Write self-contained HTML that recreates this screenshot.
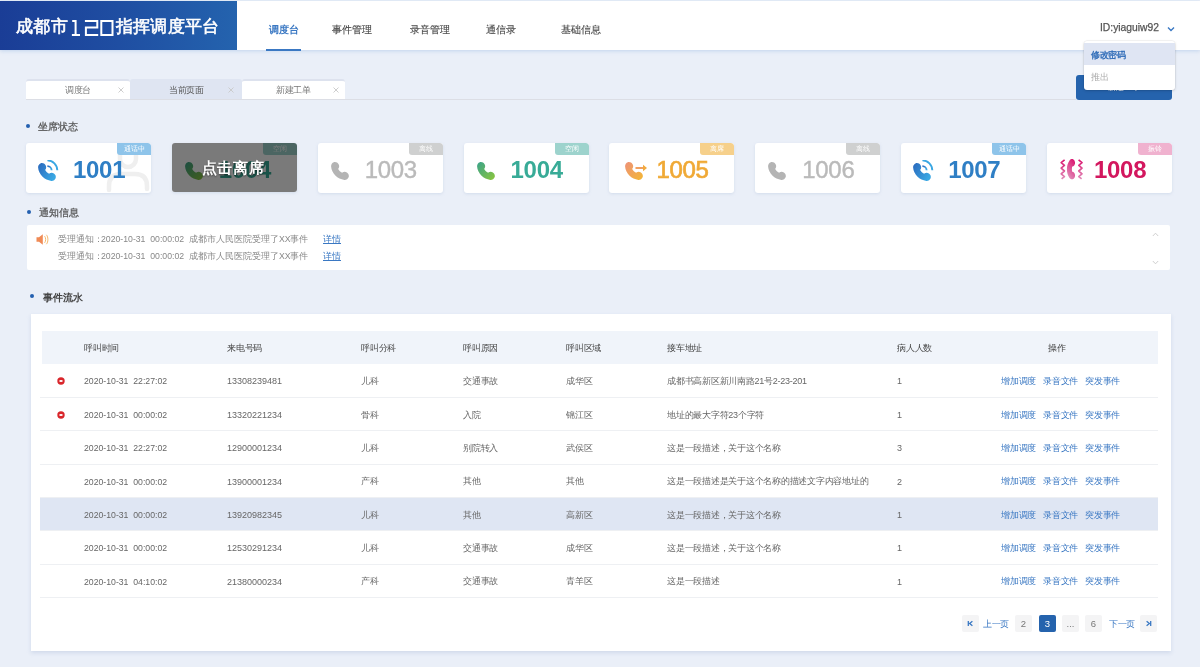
<!DOCTYPE html>
<html><head><meta charset="utf-8"><style>
*{margin:0;padding:0;box-sizing:border-box}
html,body{width:1200px;height:667px;overflow:hidden}
#root{position:absolute;left:0;top:0;width:1200px;height:667px;will-change:transform}
body{background:#eaeff8;font-family:"Liberation Sans",sans-serif;color:#555;position:relative}
.abs{position:absolute}
#hdr{position:absolute;left:0;top:1px;width:1200px;height:49px;background:#fff;box-shadow:0 1px 4px rgba(110,155,215,.32)}
#logo{position:absolute;left:0;top:0;width:237px;height:49px;background:linear-gradient(90deg,#1a3d96 0%,#1f4ea2 50%,#2463ae 100%)}
.title{position:absolute;top:13px;color:#fff;font-size:17px;-webkit-text-stroke:0.6px #fff;letter-spacing:0.4px;white-space:nowrap;line-height:26px}
.nav{position:absolute;top:18px;font-size:10px;line-height:22px;color:#4a4a4a;-webkit-text-stroke:0.15px #4a4a4a;white-space:nowrap}
.nav.on{color:#3a78c3;font-weight:bold;-webkit-text-stroke:0}
#uline{position:absolute;left:266px;top:48px;width:35px;height:2px;background:#3a78c3}
#uid{position:absolute;left:1100px;top:19px;font-size:10.3px;line-height:16px;color:#555;-webkit-text-stroke:0.25px #555}
#chev{position:absolute;left:1167px;top:25px}
#tabs{position:absolute;left:26px;top:79px;width:1050px;height:21px;border-bottom:1px solid #dcdee5}
.tab{position:absolute;top:0;height:20px;background:#fff;border-top:2px solid #dde2ee;border-radius:3px 3px 0 0;font-size:9px;letter-spacing:-0.5px;line-height:17px;color:#777}
.tab .t{position:absolute;top:1px;white-space:nowrap}
.tab .x{position:absolute;top:6px;width:6px;height:6px}
#btn{position:absolute;left:1076px;top:75px;width:96px;height:25px;background:#2563ad;border-radius:3px}
#dd{position:absolute;left:1084px;top:41px;width:91px;height:48.5px;background:#fff;border-radius:3px;box-shadow:0 0 0 0.5px rgba(0,0,0,.08),0 1px 3px rgba(0,0,0,.15)}
.sec{position:absolute;font-size:10px;line-height:14px;color:#555;-webkit-text-stroke:0.25px #555;white-space:nowrap}
.dot{position:absolute;width:4px;height:4px;border-radius:50%;background:#2460b0}
.card{position:absolute;top:143px;width:125px;height:50px;background:#fff;border-radius:3px;box-shadow:0 1px 3px rgba(170,185,215,.35);overflow:hidden}
.badge{position:absolute;right:0;top:0;width:34px;height:12px;border-radius:0 3px 0 3px;color:#fff;font-size:7px;line-height:12px;text-align:center}
.num{position:absolute;left:47px;top:14px;font-size:24px;line-height:26px;font-weight:bold;letter-spacing:-0.3px}
#notice{position:absolute;left:27px;top:225px;width:1143px;height:45px;background:#fff;border-radius:2px}
.nt{position:absolute;left:31px;font-size:8.7px;line-height:12px;color:#888;white-space:nowrap}
.nt a{color:#3a78c3;text-decoration:underline;position:absolute;left:265px}
#panel{position:absolute;left:31px;top:314px;width:1140px;height:337px;background:#fff;box-shadow:0 2px 4px rgba(170,185,215,.4)}
table{position:absolute;left:9px;top:17px;width:1118px;border-collapse:collapse;table-layout:fixed}
th{height:33px;background:#f0f4fa;letter-spacing:-0.25px;font-size:9px;font-weight:normal;color:#444;text-align:left;padding:2px 0 0 0;white-space:nowrap}
td{height:33.36px;letter-spacing:-0.25px;font-size:9px;color:#666;text-align:left;padding:2px 0 0 0;border-bottom:1px solid #eef0f3;white-space:nowrap}
tr.hl td{background:#dfe6f3}
.ops a{color:#3a78c3;margin-right:7px}
.dt{font-size:8.7px;letter-spacing:0}
.ph{letter-spacing:0}
th:first-child{background:linear-gradient(90deg,#fff 2px,#f0f4fa 2px)}
.pg{position:absolute;top:301px;height:17px;font-size:9px;line-height:17px;text-align:center;letter-spacing:-0.5px}
.pb{width:17px;background:#f4f4f5;border-radius:2px;color:#777;letter-spacing:0;font-size:9.5px}
.pl{color:#3a78c3;padding-top:1px}
</style></head><body><div id="root">

<div id="hdr">
  <div id="logo"><div class="title" style="left:16px">成都市</div><svg class="abs" style="left:70px;top:18px" width="45" height="18" viewBox="0 -1 45 18"><path d="M2.2 1H5.6M5.6 0.1V16M1.9 15.1H10M14.9 1H27.3V7.6H15.9V15H28.2M31.3 0.9H42.5V15.1H31.3Z" fill="none" stroke="#fff" stroke-width="2"/></svg><div class="title" style="left:115.5px">指挥调度平台</div></div>
  <div class="nav on" style="left:269px">调度台</div>
  <div class="nav" style="left:332px">事件管理</div>
  <div class="nav" style="left:410px">录音管理</div>
  <div class="nav" style="left:486px">通信录</div>
  <div class="nav" style="left:561px">基础信息</div>
  <div id="uline"></div>
  <div id="uid">ID:yiaguiw92</div>
  <svg id="chev" width="8" height="6" viewBox="0 0 8 6"><path d="M1 1.5 L4 4.5 L7 1.5" fill="none" stroke="#3a78c3" stroke-width="1.4"/></svg>
</div>
<div id="tabs">
  <div class="tab" style="left:0;width:104px"><span class="t" style="left:39px">调度台</span><svg class="x" style="left:92px" viewBox="0 0 6 6"><path d="M0.5 0.5L5.5 5.5M5.5 0.5L0.5 5.5" stroke="#c8c8c8" stroke-width="0.9"/></svg></div>
  <div class="tab" style="left:104px;width:112px;background:#dfe5f2;border-top-color:#dfe5f2"><span class="t" style="left:39px;color:#555">当前页面</span><svg class="x" style="left:98px" viewBox="0 0 6 6"><path d="M0.5 0.5L5.5 5.5M5.5 0.5L0.5 5.5" stroke="#c8c8c8" stroke-width="0.9"/></svg></div>
  <div class="tab" style="left:216px;width:103px"><span class="t" style="left:34px">新建工单</span><svg class="x" style="left:91px" viewBox="0 0 6 6"><path d="M0.5 0.5L5.5 5.5M5.5 0.5L0.5 5.5" stroke="#c8c8c8" stroke-width="0.9"/></svg></div>
</div>
<div id="btn"><div style="position:absolute;left:0;top:6px;width:96px;text-align:center;color:#fff;font-size:8px;line-height:13px">新建工单</div></div>
<div id="dd">
  <div style="position:absolute;left:0;top:2px;width:91px;height:22px;background:#dfe5f3"></div>
  <div style="position:absolute;left:7px;top:8px;font-size:9px;letter-spacing:-0.4px;line-height:13px;color:#2f6cb8;-webkit-text-stroke:0.35px #2f6cb8">修改密码</div>
  <div style="position:absolute;left:7px;top:30px;font-size:8.7px;line-height:13px;color:#aaa">推出</div>
</div>
<div class="dot" style="left:26px;top:124px"></div>
<div class="sec" style="left:38px;top:120px">坐席状态</div>
<div class="dot" style="left:27px;top:210px"></div>
<div class="sec" style="left:39px;top:205.5px">通知信息</div>
<div class="dot" style="left:30px;top:294px"></div>
<div class="sec" style="left:43px;top:290.5px;color:#444;-webkit-text-stroke:0;font-weight:bold">事件流水</div>

<div class="card" style="left:26.00px"><svg class="abs" style="left:80px;top:0" width="45" height="50" viewBox="0 0 45 50"><path d="M14 6v10a8 8 0 0 0 16 0V6" fill="none" stroke="#efefef" stroke-width="4.5"/><path d="M3 47V43C3 35 7 31 15 31H29C37 31 41 35 41 43V46" fill="none" stroke="#efefef" stroke-width="4.5" stroke-linecap="round"/></svg><svg class="abs" style="left:12px;top:17px" width="24" height="22" viewBox="0 -3 24 22"><defs><linearGradient id="g1" x1="0" y1="0" x2="1" y2="0.6"><stop offset="0" stop-color="#2a68bd"/><stop offset="1" stop-color="#3aa7e3"/></linearGradient></defs><path d="M2.8 0.3C4.6-0.3 6.6 0.6 7.6 2.2C8.4 3.6 8.4 5.4 7.4 6.6L7.2 6.9C8.2 8.6 9.4 9.8 11.1 10.8L11.4 10.6C12.6 9.6 14.5 9.6 15.9 10.5C17.5 11.5 18.3 13.5 17.6 15.2C17 16.9 15.3 18 13.4 17.9C6.6 17.4 0.5 11.3 0.1 4.6C0 2.6 1.1 0.9 2.8 0.3Z" fill="url(#g1)"/><path d="M9.4 3.1A4.2 4.2 0 0 1 13.6 7.3" fill="none" stroke="url(#g1)" stroke-width="1.9"/><path d="M9.4 -2.6A9.9 9.9 0 0 1 19.3 7.3" fill="none" stroke="#3aa7e3" stroke-width="1.9"/></svg><div class="num" style="color:#2f7fc5;font-weight:bold">1001</div><div class="badge" style="background:#8ec4ea">通话中</div></div>
<div class="card" style="left:171.86px;height:48.5px"><svg class="abs" style="left:13px;top:19px" width="18" height="18" viewBox="0 0 18 18"><defs><linearGradient id="g2" x1="0" y1="0" x2="1" y2="1"><stop offset="0" stop-color="#3aa38a"/><stop offset="1" stop-color="#8cc63c"/></linearGradient></defs><path d="M2.8 0.3C4.6-0.3 6.6 0.6 7.6 2.2C8.4 3.6 8.4 5.4 7.4 6.6L7.2 6.9C8.2 8.6 9.4 9.8 11.1 10.8L11.4 10.6C12.6 9.6 14.5 9.6 15.9 10.5C17.5 11.5 18.3 13.5 17.6 15.2C17 16.9 15.3 18 13.4 17.9C6.6 17.4 0.5 11.3 0.1 4.6C0 2.6 1.1 0.9 2.8 0.3Z" fill="url(#g2)"/></svg><div class="num" style="color:#38ab97;font-weight:bold">1004</div><div class="badge" style="background:#9dd3cd">空闲</div><div class="abs" style="left:0;top:0;width:125px;height:50px;background:rgba(0,0,0,.52)"></div><div class="abs" style="left:30px;top:14px;font-size:15px;letter-spacing:0.6px;line-height:22px;font-weight:bold;color:#fff;text-shadow:0 1px 2px rgba(0,0,0,.5);white-space:nowrap">点击离席</div></div>
<div class="card" style="left:317.71px"><svg class="abs" style="left:13px;top:19px" width="18" height="18" viewBox="0 0 18 18"><defs><linearGradient id="g3" x1="0" y1="0" x2="1" y2="1"><stop offset="0" stop-color="#b4b4b4"/><stop offset="1" stop-color="#b4b4b4"/></linearGradient></defs><path d="M2.8 0.3C4.6-0.3 6.6 0.6 7.6 2.2C8.4 3.6 8.4 5.4 7.4 6.6L7.2 6.9C8.2 8.6 9.4 9.8 11.1 10.8L11.4 10.6C12.6 9.6 14.5 9.6 15.9 10.5C17.5 11.5 18.3 13.5 17.6 15.2C17 16.9 15.3 18 13.4 17.9C6.6 17.4 0.5 11.3 0.1 4.6C0 2.6 1.1 0.9 2.8 0.3Z" fill="url(#g3)"/></svg><div class="num" style="color:#bababa;font-weight:normal;-webkit-text-stroke:0.4px #bababa">1003</div><div class="badge" style="background:#cfd0d0">离线</div></div>
<div class="card" style="left:463.57px"><svg class="abs" style="left:13px;top:19px" width="18" height="18" viewBox="0 0 18 18"><defs><linearGradient id="g4" x1="0" y1="0" x2="1" y2="1"><stop offset="0" stop-color="#3aa38a"/><stop offset="1" stop-color="#8cc63c"/></linearGradient></defs><path d="M2.8 0.3C4.6-0.3 6.6 0.6 7.6 2.2C8.4 3.6 8.4 5.4 7.4 6.6L7.2 6.9C8.2 8.6 9.4 9.8 11.1 10.8L11.4 10.6C12.6 9.6 14.5 9.6 15.9 10.5C17.5 11.5 18.3 13.5 17.6 15.2C17 16.9 15.3 18 13.4 17.9C6.6 17.4 0.5 11.3 0.1 4.6C0 2.6 1.1 0.9 2.8 0.3Z" fill="url(#g4)"/></svg><div class="num" style="color:#38ab97;font-weight:bold">1004</div><div class="badge" style="background:#9dd3cd">空闲</div></div>
<div class="card" style="left:609.43px"><svg class="abs" style="left:16px;top:19px" width="24" height="18" viewBox="0 0 24 18"><defs><linearGradient id="g5" x1="0" y1="0" x2="1" y2="1"><stop offset="0" stop-color="#ee9279"/><stop offset="1" stop-color="#f3b733"/></linearGradient></defs><path d="M2.8 0.3C4.6-0.3 6.6 0.6 7.6 2.2C8.4 3.6 8.4 5.4 7.4 6.6L7.2 6.9C8.2 8.6 9.4 9.8 11.1 10.8L11.4 10.6C12.6 9.6 14.5 9.6 15.9 10.5C17.5 11.5 18.3 13.5 17.6 15.2C17 16.9 15.3 18 13.4 17.9C6.6 17.4 0.5 11.3 0.1 4.6C0 2.6 1.1 0.9 2.8 0.3Z" fill="url(#g5)"/><path d="M10.5 6H19" stroke="#f0a060" stroke-width="1.8"/><path d="M18 2.8L22 6L18 9.2Z" fill="#f2aa3e"/></svg><div class="num" style="color:#f0a935;font-weight:normal;-webkit-text-stroke:0.7px #f0a935">1005</div><div class="badge" style="background:#f6d08b">离席</div></div>
<div class="card" style="left:755.28px"><svg class="abs" style="left:13px;top:19px" width="18" height="18" viewBox="0 0 18 18"><defs><linearGradient id="g6" x1="0" y1="0" x2="1" y2="1"><stop offset="0" stop-color="#b4b4b4"/><stop offset="1" stop-color="#b4b4b4"/></linearGradient></defs><path d="M2.8 0.3C4.6-0.3 6.6 0.6 7.6 2.2C8.4 3.6 8.4 5.4 7.4 6.6L7.2 6.9C8.2 8.6 9.4 9.8 11.1 10.8L11.4 10.6C12.6 9.6 14.5 9.6 15.9 10.5C17.5 11.5 18.3 13.5 17.6 15.2C17 16.9 15.3 18 13.4 17.9C6.6 17.4 0.5 11.3 0.1 4.6C0 2.6 1.1 0.9 2.8 0.3Z" fill="url(#g6)"/></svg><div class="num" style="color:#bababa;font-weight:normal;-webkit-text-stroke:0.4px #bababa">1006</div><div class="badge" style="background:#cfd0d0">离线</div></div>
<div class="card" style="left:901.14px"><svg class="abs" style="left:12px;top:17px" width="24" height="22" viewBox="0 -3 24 22"><defs><linearGradient id="g7" x1="0" y1="0" x2="1" y2="0.6"><stop offset="0" stop-color="#2a68bd"/><stop offset="1" stop-color="#3aa7e3"/></linearGradient></defs><path d="M2.8 0.3C4.6-0.3 6.6 0.6 7.6 2.2C8.4 3.6 8.4 5.4 7.4 6.6L7.2 6.9C8.2 8.6 9.4 9.8 11.1 10.8L11.4 10.6C12.6 9.6 14.5 9.6 15.9 10.5C17.5 11.5 18.3 13.5 17.6 15.2C17 16.9 15.3 18 13.4 17.9C6.6 17.4 0.5 11.3 0.1 4.6C0 2.6 1.1 0.9 2.8 0.3Z" fill="url(#g7)"/><path d="M9.4 3.1A4.2 4.2 0 0 1 13.6 7.3" fill="none" stroke="url(#g7)" stroke-width="1.9"/><path d="M9.4 -2.6A9.9 9.9 0 0 1 19.3 7.3" fill="none" stroke="#3aa7e3" stroke-width="1.9"/></svg><div class="num" style="color:#2f7fc5;font-weight:bold">1007</div><div class="badge" style="background:#8ec4ea">通话中</div></div>
<div class="card" style="left:1047.00px"><svg class="abs" style="left:12px;top:16px" width="26" height="21" viewBox="0 0 26 21"><defs><linearGradient id="g8" x1="0" y1="0" x2="0" y2="1"><stop offset="0" stop-color="#db1670"/><stop offset="1" stop-color="#e08ab8"/></linearGradient></defs><path d="M5.6 0.9L2.2 3.6L5.4 6.4L2.2 9.2L5.4 12L2.2 14.8L5.4 17.6L2.6 19.8" fill="none" stroke="url(#g8)" stroke-width="1.7" stroke-linejoin="round"/><path d="M19.6 0.9L23 3.6L19.8 6.4L23 9.2L19.8 12L23 14.8L19.8 17.6L22.6 19.8" fill="none" stroke="url(#g8)" stroke-width="1.7" stroke-linejoin="round"/><g transform="translate(13 10.2) scale(0.78 0.93) rotate(45) translate(-9 -9)"><path d="M2.8 0.3C4.6-0.3 6.6 0.6 7.6 2.2C8.4 3.6 8.4 5.4 7.4 6.6L7.2 6.9C8.2 8.6 9.4 9.8 11.1 10.8L11.4 10.6C12.6 9.6 14.5 9.6 15.9 10.5C17.5 11.5 18.3 13.5 17.6 15.2C17 16.9 15.3 18 13.4 17.9C6.6 17.4 0.5 11.3 0.1 4.6C0 2.6 1.1 0.9 2.8 0.3Z" fill="url(#g8)"/></g></svg><div class="num" style="color:#d3175e;font-weight:bold">1008</div><div class="badge" style="background:#f0b2cf">振铃</div></div>

<div id="notice">
  <svg class="abs" style="left:9px;top:9px" width="13" height="11" viewBox="0 0 13 11"><path d="M0.5 3.2H3L6.8 0.3V10.7L3 7.8H0.5Z" fill="#f08a55"/><path d="M8.6 2.2C10 3.6 10 7.4 8.6 8.8M10.4 0.8C12.4 3 12.4 8 10.4 10.2" fill="none" stroke="#f4b05c" stroke-width="0.9"/></svg>
  <div class="nt" style="top:8px">受理通知<span style="margin-right:-2px">：</span>2020-10-31&nbsp; 00:00:02&nbsp; 成都市人民医院受理了XX事件<a>详情</a></div>
  <div class="nt" style="top:25px">受理通知<span style="margin-right:-2px">：</span>2020-10-31&nbsp; 00:00:02&nbsp; 成都市人民医院受理了XX事件<a>详情</a></div>
  <svg class="abs" style="left:1125px;top:7px" width="7" height="5" viewBox="0 0 7 5"><path d="M0.8 4L3.5 1.2L6.2 4" fill="none" stroke="#c9c9c9" stroke-width="0.9"/></svg>
  <svg class="abs" style="left:1125px;top:35px" width="7" height="5" viewBox="0 0 7 5"><path d="M0.8 1L3.5 3.8L6.2 1" fill="none" stroke="#c9c9c9" stroke-width="0.9"/></svg>
</div>


<div id="panel">
<table><colgroup><col style="width:44px"><col style="width:143px"><col style="width:134px"><col style="width:102px"><col style="width:103px"><col style="width:101px"><col style="width:230px"><col style="width:104px"><col style="width:157px"></colgroup>
<tr><th></th><th>呼叫时间</th><th>来电号码</th><th>呼叫分科</th><th>呼叫原因</th><th>呼叫区域</th><th>接车地址</th><th>病人人数</th><th style="padding-left:47px">操作</th></tr>
<tr><td></td><td><span class="dt" style="position:relative"><svg width="8" height="8" viewBox="0 0 8 8" style="position:absolute;left:-27px;top:1px"><circle cx="4" cy="4" r="3.7" fill="#d9262b"/><ellipse cx="4" cy="4" rx="1.8" ry="0.9" fill="#fff"/></svg>2020-10-31&nbsp; 22:27:02</span></td><td class="ph">13308239481</td><td>儿科</td><td>交通事故</td><td>成华区</td><td>成都书高新区新川南路21号2-23-201</td><td>1</td><td class="ops"><a>增加调度</a><a>录音文件</a><a>突发事件</a></td></tr><tr><td></td><td><span class="dt" style="position:relative"><svg width="8" height="8" viewBox="0 0 8 8" style="position:absolute;left:-27px;top:1px"><circle cx="4" cy="4" r="3.7" fill="#d9262b"/><ellipse cx="4" cy="4" rx="1.8" ry="0.9" fill="#fff"/></svg>2020-10-31&nbsp; 00:00:02</span></td><td class="ph">13320221234</td><td>骨科</td><td>入院</td><td>锦江区</td><td>地址的最大字符23个字符</td><td>1</td><td class="ops"><a>增加调度</a><a>录音文件</a><a>突发事件</a></td></tr><tr><td></td><td><span class="dt" style="position:relative">2020-10-31&nbsp; 22:27:02</span></td><td class="ph">12900001234</td><td>儿科</td><td>别院转入</td><td>武侯区</td><td>这是一段描述，关于这个名称</td><td>3</td><td class="ops"><a>增加调度</a><a>录音文件</a><a>突发事件</a></td></tr><tr><td></td><td><span class="dt" style="position:relative">2020-10-31&nbsp; 00:00:02</span></td><td class="ph">13900001234</td><td>产科</td><td>其他</td><td>其他</td><td>这是一段描述是关于这个名称的描述文字内容地址的</td><td>2</td><td class="ops"><a>增加调度</a><a>录音文件</a><a>突发事件</a></td></tr><tr class="hl"><td></td><td><span class="dt" style="position:relative">2020-10-31&nbsp; 00:00:02</span></td><td class="ph">13920982345</td><td>儿科</td><td>其他</td><td>高新区</td><td>这是一段描述，关于这个名称</td><td>1</td><td class="ops"><a>增加调度</a><a>录音文件</a><a>突发事件</a></td></tr><tr><td></td><td><span class="dt" style="position:relative">2020-10-31&nbsp; 00:00:02</span></td><td class="ph">12530291234</td><td>儿科</td><td>交通事故</td><td>成华区</td><td>这是一段描述，关于这个名称</td><td>1</td><td class="ops"><a>增加调度</a><a>录音文件</a><a>突发事件</a></td></tr><tr><td></td><td><span class="dt" style="position:relative">2020-10-31&nbsp; 04:10:02</span></td><td class="ph">21380000234</td><td>产科</td><td>交通事故</td><td>青羊区</td><td>这是一段描述</td><td>1</td><td class="ops"><a>增加调度</a><a>录音文件</a><a>突发事件</a></td></tr>
</table>
<div class="pg pb" style="left:931px"><svg width="7" height="7" viewBox="0 0 7 7" style="margin-top:5px"><path d="M1.3 1V6M5.4 1.2L2.6 3.5L5.4 5.8" fill="none" stroke="#3a78c3" stroke-width="1.3"/></svg></div>
<div class="pg pl" style="left:951px;width:28px">上一页</div>
<div class="pg pb" style="left:984px">2</div>
<div class="pg pb" style="left:1008px;background:#2563ad;color:#fff">3</div>
<div class="pg pb" style="left:1031px">...</div>
<div class="pg pb" style="left:1054px">6</div>
<div class="pg pl" style="left:1077px;width:28px">下一页</div>
<div class="pg pb" style="left:1109px"><svg width="7" height="7" viewBox="0 0 7 7" style="margin-top:5px"><path d="M5.7 1V6M1.6 1.2L4.4 3.5L1.6 5.8" fill="none" stroke="#3a78c3" stroke-width="1.3"/></svg></div>
</div>

</div></body></html>
